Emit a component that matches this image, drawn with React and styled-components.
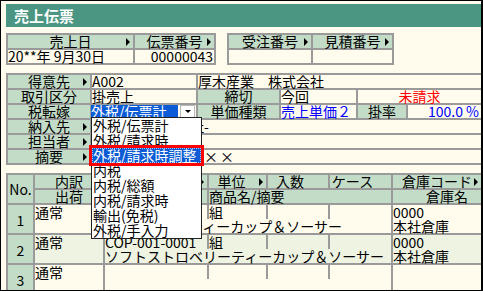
import styled, { createGlobalStyle } from "styled-components";

const GlobalStyle = createGlobalStyle`
  html, body {
    margin: 0;
    padding: 0;
    background: #fffcee;
  }
  body {
    font-family: "Noto Sans CJK JP", "Liberation Sans", sans-serif;
    font-size: 14px;
    color: #000;
  }
`;

const LINE = "#9a9a9a";
const HEAD = "#c3dcc7";
const CREAM = "#fffcee";
const ROW_ALT = "#eef3e2";

const Window = styled.div`
  position: relative;
  width: 483px;
  height: 291px;
  box-sizing: border-box;
  border: 1px solid #000;
  border-right-width: 2px;
  background: ${CREAM};
  overflow: hidden;
  padding: 3px 0 0 5px;
  display: flex;
  flex-direction: column;
`;

const TitleBar = styled.div`
  width: 475px;
  height: 23px;
  flex: none;
  background: #4a9682;
  color: #fff;
  font-weight: bold;
  font-size: 15px;
  line-height: 23px;
  padding-left: 8px;
  box-sizing: border-box;
  margin-bottom: 6px;
`;

const TopForms = styled.div`
  display: flex;
  gap: 11px;
  margin-bottom: 8px;
`;

const Grid = styled.div`
  display: grid;
  grid-template-columns: ${(p) => p.cols};
  grid-template-rows: ${(p) => p.rows || "13px"};
  grid-auto-rows: 13px;
  gap: 2px;
  padding: 2px;
  background: ${LINE};
  width: ${(p) => p.width || "max-content"};
  box-sizing: border-box;
  flex: none;
`;

const Cell = styled.div`
  position: relative;
  background: ${(p) => p.bg || CREAM};
  color: ${(p) => p.color || "#000"};
  line-height: ${(p) => p.lh || "13px"};
  height: ${(p) => p.h || "13px"};
  white-space: nowrap;
  letter-spacing: ${(p) => p.ls || 0}px;
  text-align: ${(p) => p.align || "left"};
  padding: 0 ${(p) => p.pr || 0}px 0 ${(p) => p.pl || 0}px;
  box-sizing: border-box;
  grid-column: ${(p) => p.col || "auto"};
  grid-row: ${(p) => p.row || "auto"};
  ${(p) =>
    p.arrow &&
    `
    &::after {
      content: "";
      position: absolute;
      right: 3px;
      top: 3px;
      border-left: 4px solid #000;
      border-top: 4px solid transparent;
      border-bottom: 4px solid transparent;
    }
  `}
`;

const HeadCell = styled(Cell).attrs({ bg: HEAD })`
  text-align: ${(p) => p.align || "center"};
`;

const Stack = styled.div`
  display: flex;
  flex-direction: column;
  gap: 2px;
  padding: 2px;
  background: ${LINE};
  width: 477px;
  box-sizing: border-box;
  flex: none;
  margin-bottom: 8px;
`;

const FieldRow = styled.div`
  display: grid;
  grid-template-columns: ${(p) => p.cols};
  gap: 2px;
  height: 13px;
`;

const Select = styled.div`
  display: flex;
  height: 13px;
  background: ${CREAM};
  margin-left: -1px;
`;

const SelectValue = styled.div`
  flex: 1;
  background: #0b5bd6;
  color: #fff;
  line-height: 13px;
  white-space: nowrap;
`;

const SelectButton = styled.div`
  width: 15px;
  margin: 0 1px 0 2px;
  background: #fdfdfd;
  border: 1px solid #b8b8b8;
  box-sizing: border-box;
  display: flex;
  align-items: center;
  justify-content: center;
  &::before {
    content: "";
    border-top: 3px solid #000;
    border-left: 3px solid transparent;
    border-right: 3px solid transparent;
  }
`;

const DropList = styled.ul`
  position: absolute;
  left: 90px;
  top: 116px;
  width: 111px;
  margin: 0;
  padding: 0;
  list-style: none;
  background: #fff;
  border: 1px solid #222;
  box-sizing: border-box;
  z-index: 2;
`;

const DropItem = styled.li`
  height: 15px;
  line-height: 15px;
  padding-left: 1px;
  white-space: nowrap;
  box-sizing: border-box;
  ${(p) =>
    p.active &&
    `
    background: #0b5bd6;
    color: #fff;
    border: 1px dotted #a8c8ff;
    line-height: 13px;
    padding-left: 0;
    outline: 3px solid #ff0000;
    outline-offset: 0;
  `}
`;

const SubLine = styled.div`
  display: grid;
  grid-template-columns: 102px 57px 60px 61px;
  gap: 2px;
  background: ${LINE};
  height: 14px;
`;

const SubCell = styled.div`
  background: ${(p) => p.bg};
  line-height: 14px;
  white-space: nowrap;
`;

const NameLine = styled.div`
  line-height: 14px;
  height: 14px;
  white-space: nowrap;
`;

const Stacked = styled(Cell)`
  height: 28px;
  line-height: 14px;
`;

const customerRows = [
  { label: "納入先", value: "厚木産業株式会社-" },
  { label: "担当者", value: "" },
  { label: "摘要", value: "×××××××××", ls: 2 },
];

const options = [
  "外税/伝票計",
  "外税/請求時",
  "外税/請求時調整",
  "内税",
  "内税/総額",
  "内税/請求時",
  "輸出(免税)",
  "外税/手入力",
];

const lines = [
  { no: 1, kind: "通常", code: "CUP-001-0002", unit: "組", name: "ブルーベリーティーカップ＆ソーサー", wh: "0000", whName: "本社倉庫" },
  { no: 2, kind: "通常", code: "COP-001-0001", unit: "組", name: "ソフトストロベリーティーカップ＆ソーサー", wh: "0000", whName: "本社倉庫" },
  { no: 3, kind: "通常", code: "", unit: "", name: "", wh: "", whName: "" },
];

export default function App() {
  return (
    <>
      <GlobalStyle />
      <Window>
        <TitleBar>売上伝票</TitleBar>

        <TopForms>
          <Grid cols="125px 79px">
            <HeadCell arrow>売上日</HeadCell>
            <HeadCell arrow>伝票番号</HeadCell>
            <Cell>20**年 9月30日</Cell>
            <Cell align="right" pr={1}>00000043</Cell>
          </Grid>
          <Grid cols="82px 79px">
            <HeadCell arrow>受注番号</HeadCell>
            <HeadCell arrow>見積番号</HeadCell>
            <Cell />
            <Cell />
          </Grid>
        </TopForms>

        <Stack>
          <FieldRow cols="82px 104px 1fr">
            <HeadCell arrow>得意先</HeadCell>
            <Cell>A002</Cell>
            <Cell>厚木産業　株式会社</Cell>
          </FieldRow>
          <FieldRow cols="82px 104px 81px 75px 1fr">
            <HeadCell>取引区分</HeadCell>
            <Cell>掛売上</Cell>
            <HeadCell>締切</HeadCell>
            <Cell>今回</Cell>
            <Cell align="center" color="#ff0000">未請求</Cell>
          </FieldRow>
          <FieldRow cols="82px 104px 81px 75px 48px 1fr">
            <HeadCell>税転嫁</HeadCell>
            <Select>
              <SelectValue>外税/伝票計</SelectValue>
              <SelectButton />
            </Select>
            <HeadCell>単価種類</HeadCell>
            <Cell color="#0000ff">売上単価２</Cell>
            <HeadCell>掛率</HeadCell>
            <Cell align="right" pr={2} color="#0000ff">100.0 %</Cell>
          </FieldRow>
          {customerRows.map((r) => (
            <FieldRow key={r.label} cols="82px 1fr">
              <HeadCell arrow>{r.label}</HeadCell>
              <Cell ls={r.ls}>{r.value}</Cell>
            </FieldRow>
          ))}
        </Stack>

        <Grid
          width="477px"
          cols="25px 68px 102px 57px 60px 61px 1fr"
          rows="13px 13px 28px 28px 28px"
        >
          <HeadCell row="1 / 3" h="28px" lh="28px">No.</HeadCell>
          <HeadCell>内訳</HeadCell>
          <HeadCell arrow>商品コード</HeadCell>
          <HeadCell arrow pr={12}>単位</HeadCell>
          <HeadCell pr={16}>入数</HeadCell>
          <HeadCell pr={16}>ケース</HeadCell>
          <HeadCell arrow>倉庫コード</HeadCell>
          <HeadCell>出荷</HeadCell>
          <HeadCell />
          <HeadCell col="4 / 7" align="left">商品名/摘要</HeadCell>
          <HeadCell align="right" pr={13}>倉庫名</HeadCell>

          {lines.map((l) => {
            const bg = l.no % 2 === 0 ? ROW_ALT : CREAM;
            return [
              <HeadCell key={`n${l.no}`} h="28px" lh="30px">
                {l.no}
              </HeadCell>,
              <Stacked key={`k${l.no}`} bg={bg}>{l.kind}</Stacked>,
              <Stacked key={`p${l.no}`} bg={bg} col="3 / 7">
                <SubLine>
                  <SubCell bg={bg}>{l.code}</SubCell>
                  <SubCell bg={bg}>{l.unit}</SubCell>
                  <SubCell bg={bg} />
                  <SubCell bg={bg} />
                </SubLine>
                <NameLine>{l.name}</NameLine>
              </Stacked>,
              <Stacked key={`w${l.no}`} bg={bg}>
                <NameLine>{l.wh}</NameLine>
                <NameLine>{l.whName}</NameLine>
              </Stacked>,
            ];
          })}
        </Grid>

        <DropList>
          {options.map((o, i) => (
            <DropItem key={o} active={i === 2}>
              {o}
            </DropItem>
          ))}
        </DropList>
      </Window>
    </>
  );
}
